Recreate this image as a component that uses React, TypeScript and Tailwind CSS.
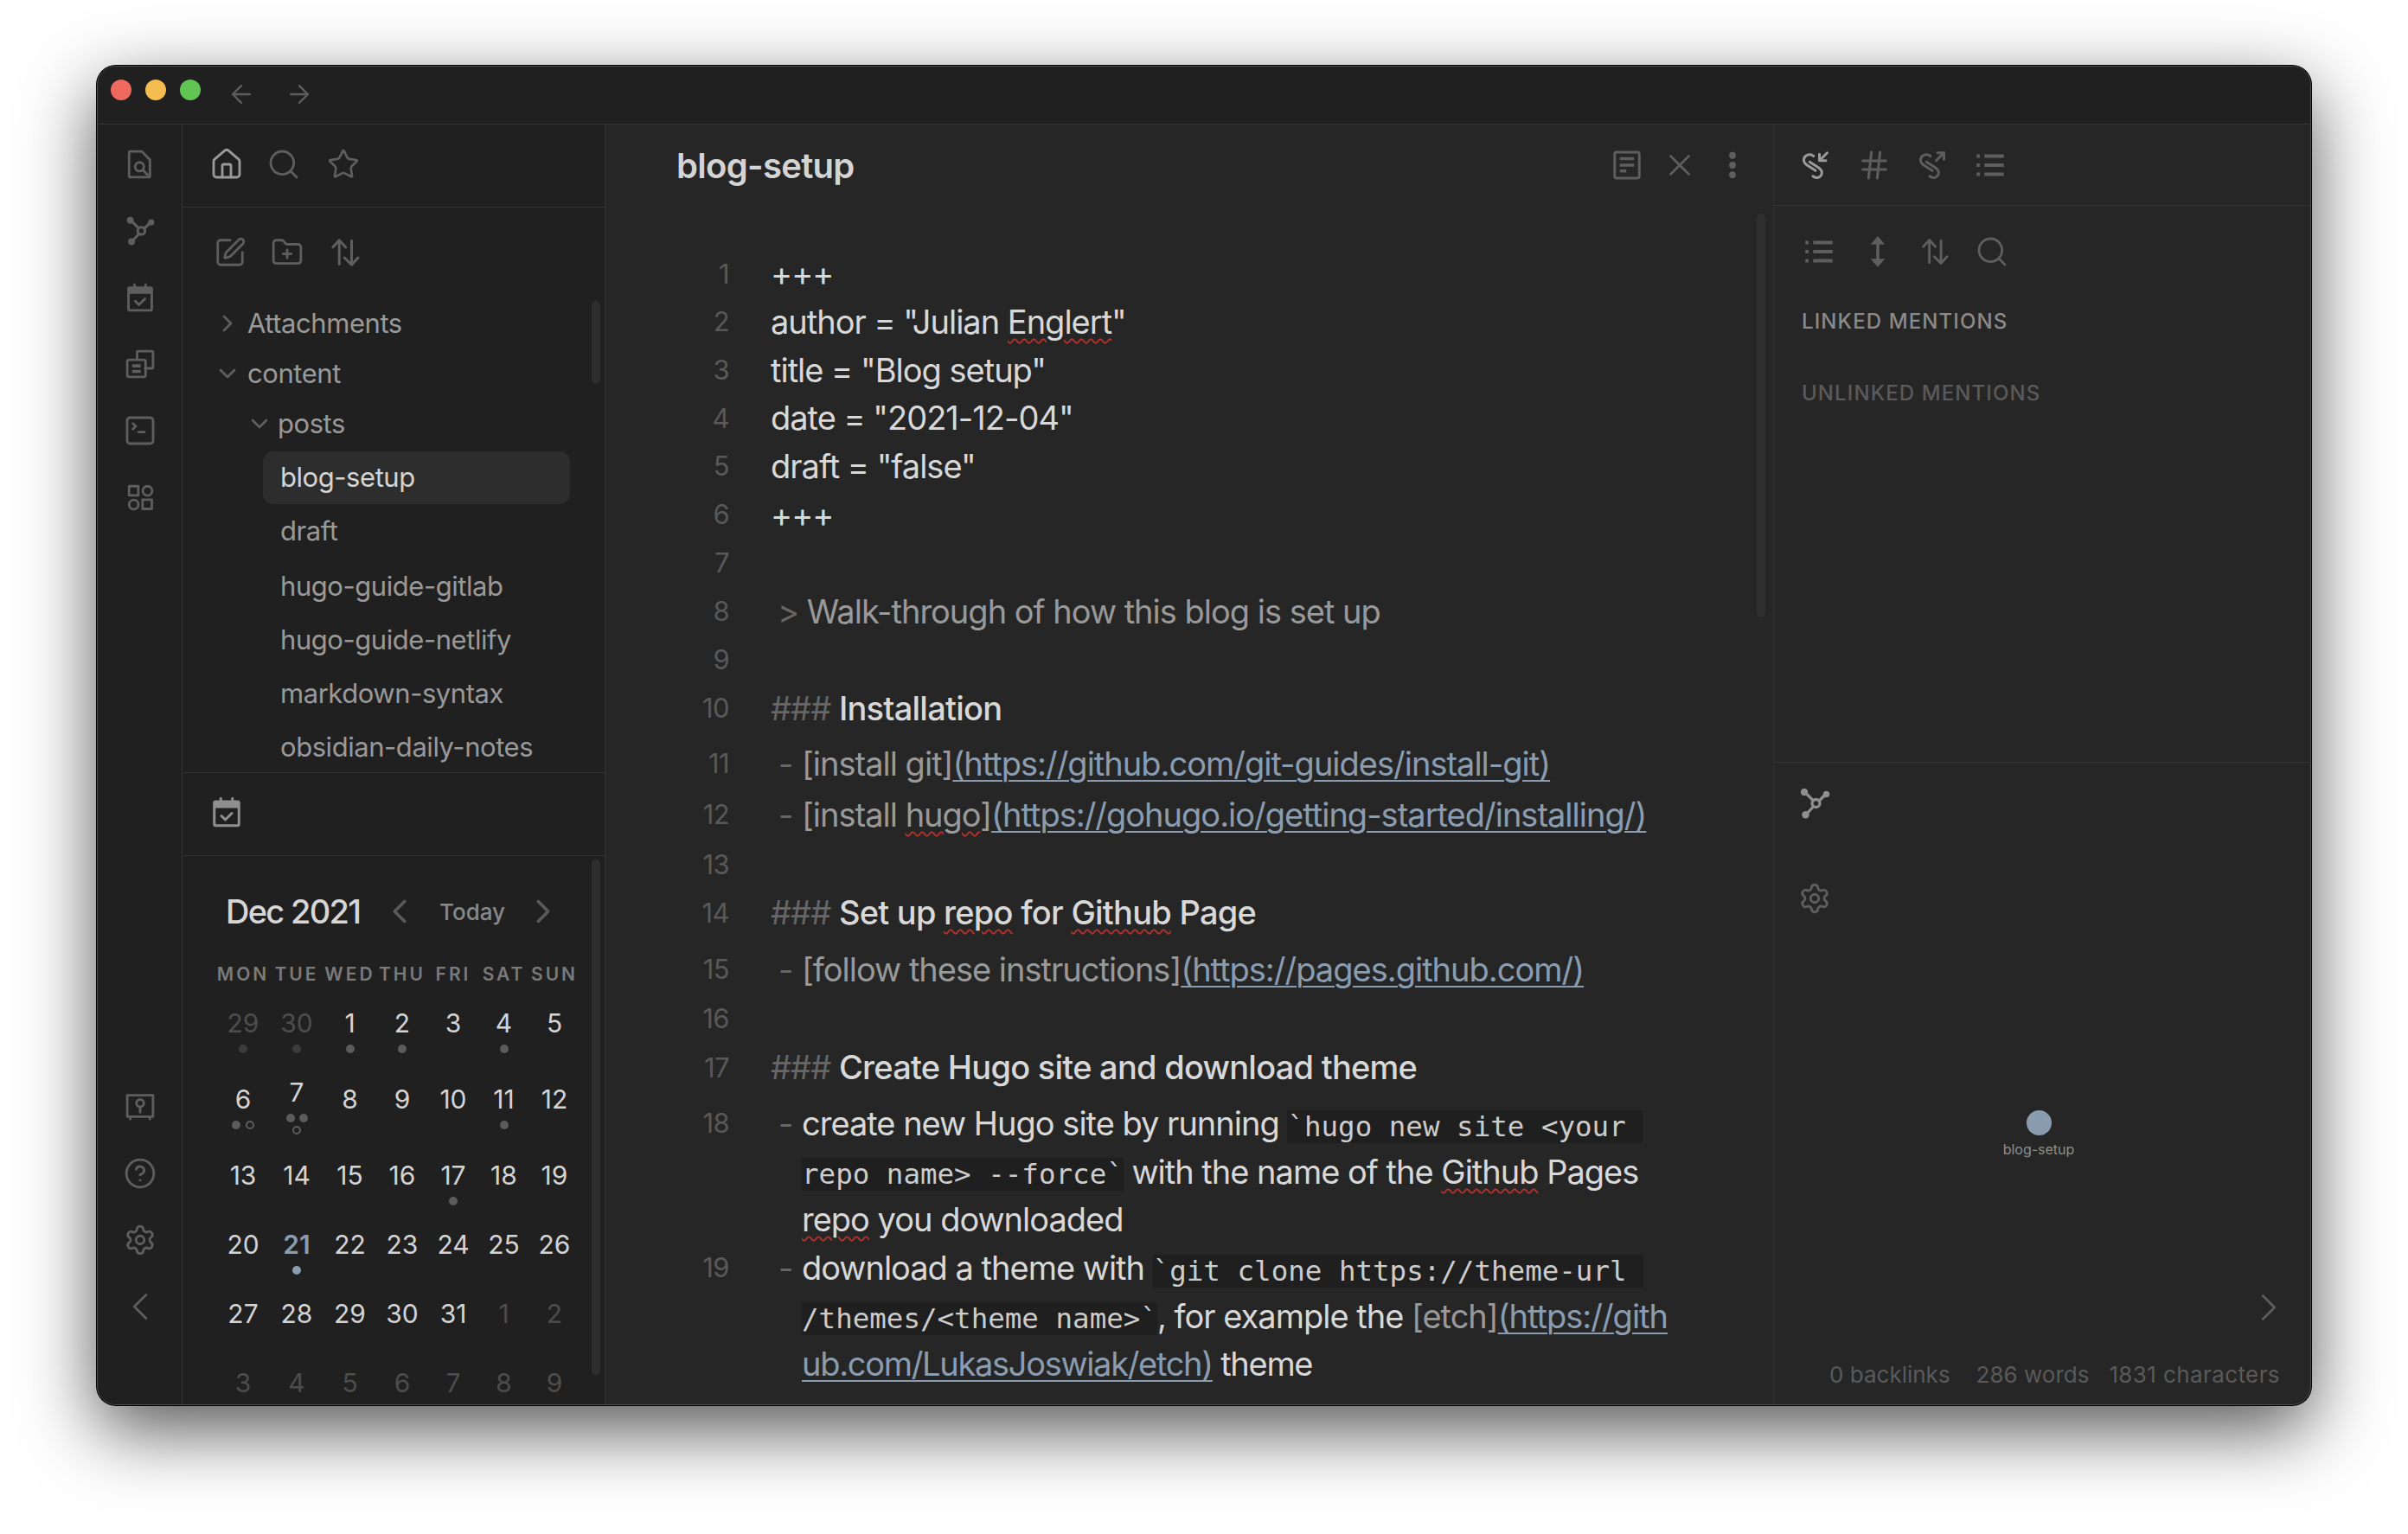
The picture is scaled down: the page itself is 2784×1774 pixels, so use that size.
import type { ReactNode } from "react";
import { ChevronDown, ChevronLeft, ChevronRight, CircleHelp, Hash, House, Search, Settings, SquarePen, SquareTerminal, Star, X, ArrowLeft, ArrowRight, FolderPlus } from "lucide-react";

type IconProps = { className?: string };

function Svg({ className, children }: IconProps & { children: ReactNode }) {
  return (
    <svg viewBox="0 0 24 24" fill="none" stroke="currentColor" strokeWidth="2" strokeLinecap="round" strokeLinejoin="round" className={className}>
      {children}
    </svg>
  );
}

const FileSearchIcon = ({ className }: IconProps) => (
  <Svg className={className}>
    <path d="M4 1.500h9.500l6.500 7v13a1 1 0 0 1-1 1h-15a1 1 0 0 1-1-1v-19a1 1 0 0 1 1-1z" />
    <circle cx="11.500" cy="14" r="3.600" />
    <path d="M14.500 17l3.500 3.500" />
  </Svg>
);

const GraphIcon = ({ className }: IconProps) => (
  <Svg className={className}>
    <circle cx="13" cy="12" r="3" strokeWidth="2.200" />
    <path d="M10.800 9.800L4.500 3.500M15.500 10L20.500 5M11 14.500L5.500 20.500" strokeWidth="2.200" />
    <circle cx="4" cy="3.300" r="2.800" fill="currentColor" stroke="none" />
    <circle cx="21" cy="5" r="2.500" fill="currentColor" stroke="none" />
    <circle cx="5" cy="20.800" r="2.800" fill="currentColor" stroke="none" />
  </Svg>
);

const CalendarIcon = ({ className }: IconProps) => (
  <Svg className={className}>
    <rect x="2.500" y="4" width="19" height="18.500" rx="1" />
    <path d="M2.500 6.500h19" strokeWidth="5" strokeLinecap="butt" />
    <path d="M7.500 1.500v3M16.500 1.500v3" />
    <path d="M8 15l3 3 5-5" />
  </Svg>
);

const CopiesIcon = ({ className }: IconProps) => (
  <Svg className={className}>
    <path d="M9.500 8V2.500a1 1 0 0 1 1-1h11a1 1 0 0 1 1 1v12a1 1 0 0 1-1 1h-5.500" />
    <rect x="1.500" y="8.500" width="15" height="14" rx="1.500" />
    <path d="M5.500 13.500h7M5.500 18h7" strokeWidth="2.600" strokeLinecap="butt" />
  </Svg>
);

const ShapesIcon = ({ className }: IconProps) => (
  <Svg className={className}>
    <rect x="3" y="3" width="7.500" height="7.500" />
    <circle cx="18" cy="6.800" r="3.800" />
    <circle cx="6.800" cy="18" r="3.800" />
    <rect x="14" y="14" width="7.500" height="7.500" />
  </Svg>
);

const VaultIcon = ({ className }: IconProps) => (
  <Svg className={className}>
    <path d="M1.500 2.500h21v17.500h-21z" />
    <circle cx="12" cy="9" r="3" />
    <path d="M12 12.500v4M4 20.500v1.500M20 20.500v1.500" />
  </Svg>
);

const SortIcon = ({ className }: IconProps) => (
  <Svg className={className}>
    <path d="M7.500 21V2.500M2.500 8l5-5.500 5 5.500M17 3v18.500M11.500 16l5.500 5.500 5-5.500" />
  </Svg>
);

const DocIcon = ({ className }: IconProps) => (
  <Svg className={className}>
    <rect x="2.500" y="2" width="19" height="20" rx="1.500" />
    <path d="M6.500 7h11M6.500 12h11M6.500 16.500h5" strokeWidth="2.400" strokeLinecap="butt" />
  </Svg>
);

const DotsIcon = ({ className }: IconProps) => (
  <svg viewBox="0 0 24 24" fill="currentColor" className={className}>
    <circle cx="12" cy="4.500" r="2.600" />
    <circle cx="12" cy="12" r="2.600" />
    <circle cx="12" cy="19.500" r="2.600" />
  </svg>
);

const ChainInIcon = ({ className }: IconProps) => (
  <Svg className={className}>
    <path d="M10.500 5C8 2.800 3.500 4 3 7.500c-.3 2 1 3.500 2.500 4.500l6.500 4.200" />
    <path d="M7.500 9.500l6.500 4.200c2.200 1.500 3.300 3 2.800 5-.6 2.800-4.300 4-6.800 1.800" />
    <path d="M21 2.500l-6 6M15 3.500v5h5" />
  </Svg>
);

const ChainOutIcon = ({ className }: IconProps) => (
  <Svg className={className}>
    <path d="M10.500 5C8 2.800 3.500 4 3 7.500c-.3 2 1 3.500 2.500 4.500l6.500 4.200" />
    <path d="M7.500 9.500l6.500 4.200c2.200 1.500 3.300 3 2.800 5-.6 2.800-4.300 4-6.800 1.800" />
    <path d="M15 8.500l6-6M16 2.500h5v5" />
  </Svg>
);

const ListIcon = ({ className }: IconProps) => (
  <svg viewBox="0 0 24 24" fill="none" stroke="currentColor" className={className}>
    <path d="M7.500 5h15M7.500 12h15M7.500 19h15" strokeWidth="2.600" />
    <path d="M1.500 5h2.500M1.500 12h2.500M1.500 19h2.500" strokeWidth="2.600" />
  </svg>
);

const ExpandIcon = ({ className }: IconProps) => (
  <svg viewBox="0 0 24 24" className={className}>
    <path d="M12 5v14" stroke="currentColor" strokeWidth="2.400" />
    <path d="M12 0l5.500 6.500h-11zM12 24l-5.500-6.500h11z" fill="currentColor" />
  </svg>
);

const ribbonClass = "h-[34px] w-[34px] text-[#5e5e5e]";
const iconGrey = "text-[#5e5e5e]";

const treeFiles = ["draft", "hugo-guide-gitlab", "hugo-guide-netlify", "markdown-syntax", "obsidian-daily-notes"];

function Ribbon() {
  return (
    <div className="flex w-[98px] shrink-0 flex-col items-center gap-[43px] border-r border-[#333333] pb-[96px] pt-[29px]">
      <FileSearchIcon className={ribbonClass} />
      <GraphIcon className={ribbonClass} />
      <CalendarIcon className={ribbonClass} />
      <CopiesIcon className={ribbonClass} />
      <SquareTerminal className={`-my-[3px] h-[40px] w-[40px] ${iconGrey}`} strokeWidth={1.7} />
      <ShapesIcon className={ribbonClass} />
      <div className="mt-auto flex flex-col items-center gap-[43px]">
        <VaultIcon className={ribbonClass} />
        <CircleHelp className={`-my-[2px] h-[38px] w-[38px] ${iconGrey}`} strokeWidth={1.8} />
        <Settings className={`-my-[2px] h-[38px] w-[38px] ${iconGrey}`} strokeWidth={1.8} />
        <ChevronLeft className={`-my-[10px] h-[54px] w-[54px] ${iconGrey}`} strokeWidth={1.2} />
      </div>
    </div>
  );
}

type Dot = "fill" | "ring" | "fade" | "accent";
type Day = { d: number; tone?: "fade" | "accent"; dots?: Dot[]; up?: boolean };

const weekdays = ["MON", "TUE", "WED", "THU", "FRI", "SAT", "SUN"];

const weeks: { cls: string; days: Day[] }[] = [
  {
    cls: "h-[88px]",
    days: [
      { d: 29, tone: "fade", dots: ["fade"] },
      { d: 30, tone: "fade", dots: ["fade"] },
      { d: 1, dots: ["fill"] },
      { d: 2, dots: ["fill"] },
      { d: 3 },
      { d: 4, dots: ["fill"] },
      { d: 5 },
    ],
  },
  {
    cls: "h-[88px]",
    days: [
      { d: 6, dots: ["fill", "ring"] },
      { d: 7, dots: ["fill", "fill", "ring"], up: true },
      { d: 8 },
      { d: 9 },
      { d: 10 },
      { d: 11, dots: ["fill"] },
      { d: 12 },
    ],
  },
  {
    cls: "h-[80px]",
    days: [{ d: 13 }, { d: 14 }, { d: 15 }, { d: 16 }, { d: 17, dots: ["fill"] }, { d: 18 }, { d: 19 }],
  },
  {
    cls: "h-[80px]",
    days: [{ d: 20 }, { d: 21, tone: "accent", dots: ["accent"] }, { d: 22 }, { d: 23 }, { d: 24 }, { d: 25 }, { d: 26 }],
  },
  {
    cls: "h-[80px]",
    days: [{ d: 27 }, { d: 28 }, { d: 29 }, { d: 30 }, { d: 31 }, { d: 1, tone: "fade" }, { d: 2, tone: "fade" }],
  },
  {
    cls: "h-[80px]",
    days: [3, 4, 5, 6, 7, 8, 9].map((d) => ({ d, tone: "fade" as const })),
  },
];

const dotClass: Record<Dot, string> = {
  fill: "bg-[#5c5c5c]",
  ring: "border-2 border-[#5c5c5c]",
  fade: "bg-[#3c3c3c]",
  accent: "bg-[#8a9db0]",
};

function CalendarDay({ day }: { day: Day }) {
  const color = day.tone === "fade" ? "text-[#4d4d4d]" : day.tone === "accent" ? "font-semibold text-[#8a9db0]" : "text-[#d4d4d4]";
  return (
    <div className={day.up ? "-mt-[8px] flex flex-col items-center" : "flex flex-col items-center"}>
      <span className={`h-[40px] text-[30px] leading-[40px] ${color}`}>{day.d}</span>
      {day.dots && (
        <div className={day.up ? "mt-[5px] flex w-[30px] flex-wrap justify-center gap-x-[5px] gap-y-[4px]" : "mt-[5px] flex justify-center gap-[6px]"}>
          {day.dots.map((dot, i) => (
            <span key={i} className={`h-[10px] w-[10px] rounded-full ${dotClass[dot]}`} />
          ))}
        </div>
      )}
    </div>
  );
}

function CalendarPanel() {
  return (
    <div className="pl-[39px] pt-[40px]">
      <div className="flex h-[48px] items-center">
        <span className="ml-[11px] w-[156px] whitespace-nowrap text-[38px] font-medium tracking-[-1.7px] text-[#d6d6d6]">Dec 2021</span>
        <ChevronLeft className="ml-[22px] h-[46px] w-[46px] text-[#5a5a5a]" strokeWidth={1.9} />
        <span className="ml-[23px] w-[74px] text-[26px] font-medium text-[#888888]">Today</span>
        <ChevronRight className="ml-[23px] h-[46px] w-[46px] text-[#5a5a5a]" strokeWidth={1.9} />
      </div>
      <div className="mt-[34px] grid h-[30px] grid-cols-[62px_62px_61px_60px_58px_59px_58px] text-center text-[21px] font-semibold leading-[30px] tracking-[3px] text-[#7a7a7a]">
        {weekdays.map((w) => (
          <span key={w} className="whitespace-nowrap">
            {w}
          </span>
        ))}
      </div>
      <div className="mt-[21px]">
        {weeks.map((week, i) => (
          <div key={i} className={`grid grid-cols-[62px_62px_61px_60px_58px_59px_58px] ${week.cls}`}>
            {week.days.map((day, j) => (
              <CalendarDay key={j} day={day} />
            ))}
          </div>
        ))}
      </div>
    </div>
  );
}

function Sidebar() {
  return (
    <div className="flex w-[489px] shrink-0 flex-col overflow-hidden border-r border-[#333333]">
      <div className="flex h-[96px] shrink-0 items-center border-b border-[#333333] pb-[3px] pl-[31px]">
        <House className="h-[40px] w-[40px] text-[#9a9a9a]" strokeWidth={1.7} />
        <Search className={`ml-[26px] h-[40px] w-[40px] ${iconGrey}`} strokeWidth={1.7} />
        <Star className={`ml-[30px] h-[38px] w-[38px] ${iconGrey}`} strokeWidth={1.7} />
      </div>
      <div className="relative h-[653px] shrink-0 overflow-hidden">
        <div className="flex h-[74px] items-center pl-[36px] pt-[30px]">
          <SquarePen className={`h-[38px] w-[38px] ${iconGrey}`} strokeWidth={1.8} />
          <FolderPlus className={`ml-[28px] h-[38px] w-[38px] ${iconGrey}`} strokeWidth={1.8} />
          <SortIcon className={`ml-[30px] h-[36px] w-[36px] ${iconGrey}`} />
        </div>
        <div className="pt-[31px] text-[31px] tracking-[-0.45px] text-[#999999]">
          <div className="flex h-[58px] items-center pl-[36px]">
            <ChevronRight className={`h-[32px] w-[32px] ${iconGrey}`} strokeWidth={2} />
            <span className="ml-[7px]">Attachments</span>
          </div>
          <div className="flex h-[58px] items-center pl-[36px]">
            <ChevronDown className={`h-[32px] w-[32px] ${iconGrey}`} strokeWidth={2} />
            <span className="ml-[7px]">content</span>
          </div>
          <div className="flex h-[58px] items-center pl-[73px]">
            <ChevronDown className={`h-[32px] w-[32px] ${iconGrey}`} strokeWidth={2} />
            <span className="ml-[5px]">posts</span>
          </div>
          <div className="ml-[93px] mt-[3px] flex h-[61px] w-[355px] items-center rounded-[12px] bg-[#2d2d2d] pl-[20px] text-[#d4d4d4]">blog-setup</div>
          {treeFiles.map((name, i) => (
            <div key={name} className={i === 1 ? "ml-[93px] mt-[2px] flex h-[62px] items-center pl-[20px]" : "ml-[93px] flex h-[62px] items-center pl-[20px]"}>
              {name}
            </div>
          ))}
        </div>
        <div className="absolute left-[473px] top-[108px] h-[96px] w-[10px] rounded-full bg-[#2e2e2e]" />
      </div>
      <div className="flex h-[97px] shrink-0 items-center border-y border-[#333333] pb-[5px] pl-[33px]">
        <CalendarIcon className="h-[36px] w-[36px] text-[#8f8f8f]" />
      </div>
      <div className="relative flex-1">
        <CalendarPanel />
        <div className="absolute left-[473px] top-[4px] h-[596px] w-[10px] rounded-full bg-[#2e2e2e]" />
      </div>
    </div>
  );
}

function Line({ n, mt, children }: { n?: number; mt?: string; children?: ReactNode }) {
  return (
    <div className={`flex h-[55.7px] items-center whitespace-pre ${mt ?? ""}`}>
      <span className="w-[60px] shrink-0 text-right text-[31px] tracking-[-0.6px] text-[#595959]">{n}</span>
      <div className="pl-[48px]">{children}</div>
    </div>
  );
}

const Dash = () => <span className="inline-block w-[36px] pl-[9px] text-[#666666]">-</span>;
const Wrap = () => <span className="inline-block w-[36px]" />;
const Muted = ({ children }: { children: ReactNode }) => <span className="text-[#999999]">{children}</span>;
const Hashes = () => <span className="text-[#666666]">### </span>;
const Url = ({ children }: { children: ReactNode }) => <span className="text-[#8a9db0] underline decoration-2 underline-offset-[5px]">{children}</span>;
const Typo = ({ children }: { children: ReactNode }) => (
  <span className="underline decoration-[#b3312b] decoration-wavy decoration-2 underline-offset-[5px]">{children}</span>
);
const Code = ({ children }: { children: ReactNode }) => (
  <span className="inline-block h-[38px] bg-[#1f1f1f] align-middle font-['DejaVu_Sans_Mono',monospace] text-[32.5px] leading-[38px] tracking-normal text-[#cccccc]">{children}</span>
);
const Heading = ({ children }: { children: ReactNode }) => <span className="font-medium tracking-[-0.75px]">{children}</span>;

function Editor() {
  return (
    <div className="relative flex w-[1351px] shrink-0 flex-col overflow-hidden border-r border-[#333333]">
      <div className="flex h-[96px] shrink-0 items-center pl-[82px] pr-[29px]">
        <span className="mr-auto text-[40px] font-semibold tracking-[-0.7px] text-[#d4d4d4]">blog-setup</span>
        <div className="-mt-[3px] flex items-center gap-[25px]">
          <DocIcon className={`h-[36px] w-[36px] ${iconGrey}`} />
          <X className={`-mx-[3px] h-[42px] w-[42px] ${iconGrey}`} strokeWidth={1.5} />
          <DotsIcon className={`h-[36px] w-[36px] ${iconGrey}`} />
        </div>
      </div>
      <div className="pl-[83px] pt-[49px] text-[38px] tracking-[-1px] text-[#d8d8d8]">
        <Line n={1}>+++</Line>
        <Line n={2}>
          author = "Julian <Typo>Englert</Typo>"
        </Line>
        <Line n={3}>title = "Blog setup"</Line>
        <Line n={4}>date = "2021-12-04"</Line>
        <Line n={5}>draft = "false"</Line>
        <Line n={6}>+++</Line>
        <Line n={7} />
        <Line n={8} mt="mt-px">
          <span className="pl-[8px] text-[#666666]">{"> "}</span>
          <Muted>Walk-through of how this blog is set up</Muted>
        </Line>
        <Line n={9} />
        <Line n={10}>
          <Hashes />
          <Heading>Installation</Heading>
        </Line>
        <Line n={11} mt="mt-[9px]">
          <Dash />
          <Muted>[install git]</Muted>
          <Url>(https://github.com/git-guides/install-git)</Url>
        </Line>
        <Line n={12} mt="mt-[3px]">
          <Dash />
          <Muted>
            [install <Typo>hugo</Typo>]
          </Muted>
          <Url>(https://gohugo.io/getting-started/installing/)</Url>
        </Line>
        <Line n={13} mt="mt-[2px]" />
        <Line n={14}>
          <Hashes />
          <Heading>
            Set up <Typo>repo</Typo> for <Typo>Github</Typo> Page
          </Heading>
        </Line>
        <Line n={15} mt="mt-[10px]">
          <Dash />
          <Muted>[follow these instructions]</Muted>
          <Url>(https://pages.github.com/)</Url>
        </Line>
        <Line n={16} mt="mt-px" />
        <Line n={17} mt="mt-px">
          <Hashes />
          <Heading>Create Hugo site and download theme</Heading>
        </Line>
        <Line n={18} mt="mt-[9px]">
          <Dash />
          create new Hugo site by running <Code>`hugo new site &lt;your </Code>
        </Line>
        <Line>
          <Wrap />
          <Code>repo name&gt; --force`</Code> with the name of the <Typo>Github</Typo> Pages
        </Line>
        <Line>
          <Wrap />
          <Typo>repo</Typo> you downloaded
        </Line>
        <Line n={19}>
          <Dash />
          download a theme with <Code>`git clone https://theme-url </Code>
        </Line>
        <Line>
          <Wrap />
          <Code>/themes/&lt;theme name&gt;`</Code>, for example the <Muted>[etch]</Muted>
          <Url>(https://gith</Url>
        </Line>
        <Line>
          <Wrap />
          <span className="tracking-[-1.3px]">
            <Url>ub.com/LukasJoswiak/etch)</Url> theme
          </span>
        </Line>
      </div>
      <div className="absolute left-[1331px] top-[103px] h-[467px] w-[10px] rounded-full bg-[#2f2f2f]" />
    </div>
  );
}

function RightPanel() {
  return (
    <div className="flex flex-1 flex-col">
      <div className="h-[738px] shrink-0 border-b border-[#333333]">
        <div className="flex h-[94px] items-center border-b border-[#333333] pl-[30px]">
          <ChainInIcon className="h-[36px] w-[36px] text-[#9a9a9a]" />
          <Hash className={`ml-[30px] h-[40px] w-[40px] ${iconGrey}`} strokeWidth={1.8} />
          <ChainOutIcon className={`ml-[29px] h-[36px] w-[36px] ${iconGrey}`} />
          <ListIcon className={`ml-[31px] h-[36px] w-[36px] ${iconGrey}`} />
        </div>
        <div className="flex h-[75px] items-center pl-[34px] pt-[31px]">
          <ListIcon className={`h-[36px] w-[36px] ${iconGrey}`} />
          <ExpandIcon className={`ml-[32px] h-[36px] w-[36px] ${iconGrey}`} />
          <SortIcon className={`ml-[31px] h-[34px] w-[34px] ${iconGrey}`} />
          <Search className={`ml-[29px] h-[40px] w-[40px] ${iconGrey}`} strokeWidth={1.7} />
        </div>
        <div className="pl-[32px] pt-[44px] text-[24px] font-medium leading-[30px] tracking-[1.1px]">
          <div className="text-[#8a8a8a]">LINKED MENTIONS</div>
          <div className="mt-[53px] text-[#5a5a5a]">UNLINKED MENTIONS</div>
        </div>
      </div>
      <div className="relative flex flex-1 flex-col pl-[29px] pt-[29px]">
        <GraphIcon className="h-[36px] w-[36px] text-[#8f8f8f]" />
        <Settings className={`-ml-[1px] mt-[73px] h-[38px] w-[38px] ${iconGrey}`} strokeWidth={1.8} />
        <div className="absolute left-[256px] top-[402px] flex w-[100px] flex-col items-center">
          <span className="h-[29px] w-[29px] rounded-full bg-[#8a9db0]" />
          <span className="mt-[6px] text-[16px] leading-[20px] text-[#8e8e8e]">blog-setup</span>
        </div>
        <ChevronRight className={`absolute left-[545px] top-[603px] h-[54px] w-[54px] ${iconGrey}`} strokeWidth={1.2} />
        <div className="mt-auto flex h-[70px] items-center justify-end gap-[23px] pr-[35px] text-[26px] text-[#5a5a5a]">
          <span className="mr-[7px]">0 backlinks</span>
          <span>286 words</span>
          <span className="tracking-[0.4px]">1831 characters</span>
        </div>
      </div>
    </div>
  );
}

export default function App() {
  return (
    <div className="h-[1774px] w-[2784px] overflow-hidden bg-white pl-[112px] pt-[76px] font-['Inter',sans-serif]">
      <div className="flex h-[1549px] w-[2560px] flex-col overflow-hidden rounded-[22px] border border-[#4c4c4c] bg-[#262626] shadow-[0_0_0_1px_#000,0_28px_85px_rgba(0,0,0,0.68)]">
        <div className="flex h-[67px] shrink-0 items-center border-b border-[#333333] bg-[#202020] pl-[15px]">
          <span className="-mt-[12px] h-[24px] w-[24px] rounded-full bg-[#ee6a5f]" />
          <span className="-mt-[12px] ml-[16px] h-[24px] w-[24px] rounded-full bg-[#f5bd4f]" />
          <span className="-mt-[12px] ml-[16px] h-[24px] w-[24px] rounded-full bg-[#61c454]" />
          <ArrowLeft className="-mt-[2px] ml-[30px] h-[34px] w-[34px] text-[#5e5e5e]" strokeWidth={1.6} />
          <ArrowRight className="-mt-[2px] ml-[33px] h-[34px] w-[34px] text-[#5e5e5e]" strokeWidth={1.6} />
        </div>
        <div className="flex min-h-0 flex-1">
          <div className="flex shrink-0 bg-[#202020]">
            <Ribbon />
            <Sidebar />
          </div>
          <Editor />
          <RightPanel />
        </div>
      </div>
    </div>
  );
}
